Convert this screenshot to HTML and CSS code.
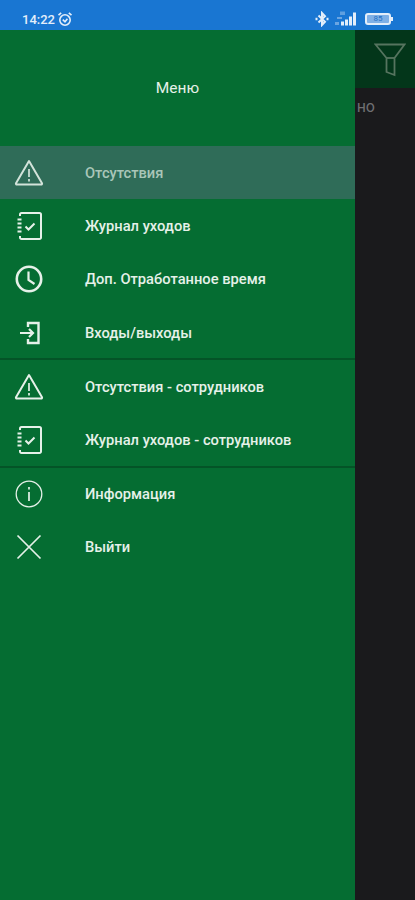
FILE: index.html
```html
<!DOCTYPE html>
<html lang="ru">
<head>
    <meta charset="UTF-8">
    <meta name="viewport" content="width=device-width, initial-scale=1.0">
    <title>Меню</title>
    <link rel="stylesheet" href="styles.css">
</head>
<body>
    <div class="status-bar">
        <div class="status-left">
            <span class="status-time">14:22</span>
            <svg class="status-alarm" width="16" height="16" viewBox="0 0 16 16" fill="none" stroke="#e3eefa" stroke-width="1.6">
                <circle cx="8" cy="9" r="5.2"/>
                <path d="M1.5 4.2 4.2 1.8M14.5 4.2 11.8 1.8M5.8 8.6 8 10.8l2.4-3"/>
            </svg>
        </div>
        <div class="status-right">
            <svg width="14" height="16" viewBox="0 0 14 16" fill="none" stroke="#e3eefa" stroke-width="2">
                <path d="M3.500 4.500 10 10.800 7 14V2l3 3.200L3.500 11.500"/>
                <path d="M0.500 8h2M11.500 8h2" stroke-width="2.400"/>
            </svg>
            <svg width="26" height="16" viewBox="0 0 26 16" fill="#e3eefa">
                <path d="M6 0.500h5v3.500H6z" opacity="0.35"/>
                <path d="M1 11h4v3H1zM3 6h5v2H3z" opacity="0.4"/>
                <rect x="7" y="10.500" width="3" height="4"/>
                <rect x="11" y="8.500" width="3" height="6"/>
                <rect x="15" y="5.500" width="3" height="9"/>
                <rect x="19" y="1.500" width="3" height="13"/>
            </svg>
            <div class="battery"><span class="battery-level">85</span></div>
        </div>
    </div>

    <div class="screen">
        <div class="main">
            <div class="toolbar">
                <svg width="32" height="34" viewBox="0 0 32 34" fill="none" stroke="#56745f" stroke-width="1.800">
                    <path d="M1.500 1.500h29L20.500 15v17l-8-3V15z"/>
                    <path d="M12.500 15h8"/>
                </svg>
            </div>
            <div class="empty-text">но</div>
        </div>

        <nav class="drawer">
            <div class="drawer-title">Меню</div>

            <div class="menu-group">
                <a class="menu-item active">
                    <svg class="menu-icon" viewBox="0 0 30 30"><use href="#ic-warning"/></svg>
                    <span>Отсутствия</span>
                </a>
                <a class="menu-item">
                    <svg class="menu-icon" viewBox="0 0 30 30"><use href="#ic-journal"/></svg>
                    <span>Журнал уходов</span>
                </a>
                <a class="menu-item">
                    <svg class="menu-icon" viewBox="0 0 30 30"><use href="#ic-clock"/></svg>
                    <span>Доп. Отработанное время</span>
                </a>
                <a class="menu-item">
                    <svg class="menu-icon" viewBox="0 0 30 30"><use href="#ic-enter"/></svg>
                    <span>Входы/выходы</span>
                </a>
            </div>

            <div class="menu-group">
                <a class="menu-item">
                    <svg class="menu-icon" viewBox="0 0 30 30"><use href="#ic-warning"/></svg>
                    <span>Отсутствия - сотрудников</span>
                </a>
                <a class="menu-item">
                    <svg class="menu-icon" viewBox="0 0 30 30"><use href="#ic-journal"/></svg>
                    <span>Журнал уходов - сотрудников</span>
                </a>
            </div>

            <div class="menu-group">
                <a class="menu-item">
                    <svg class="menu-icon" viewBox="0 0 30 30"><use href="#ic-info"/></svg>
                    <span>Информация</span>
                </a>
                <a class="menu-item">
                    <svg class="menu-icon" viewBox="0 0 30 30"><use href="#ic-close"/></svg>
                    <span>Выйти</span>
                </a>
            </div>
        </nav>
    </div>

    <!-- icons -->
    <svg class="icon-defs" width="0" height="0">
        <symbol id="ic-warning" viewBox="0 0 30 30">
            <path d="M15 3 28 25.200a1 1 0 0 1-.9 1.400H2.900a1 1 0 0 1-.9-1.400z" fill="none" stroke="currentColor" stroke-width="2" stroke-linejoin="round"/>
            <path d="M15 11v8M15 21v2.500" fill="none" stroke="currentColor" stroke-width="1.700"/>
        </symbol>
        <symbol id="ic-journal" viewBox="0 0 30 30">
            <path d="M6 5V3.500A1.500 1.500 0 0 1 7.500 2H25.500A1.500 1.500 0 0 1 27 3.500v23a1.500 1.500 0 0 1-1.500 1.500H7.500A1.500 1.500 0 0 1 6 26.500V25" fill="none" stroke="currentColor" stroke-width="2"/>
            <path d="M3.500 8.500h4M3.500 12.500h4M3.500 16.500h4M3.500 20.500h4" fill="none" stroke="currentColor" stroke-width="1.800"/>
            <path d="M11.500 15.500 14.500 18.500 20.500 12.500" fill="none" stroke="currentColor" stroke-width="2"/>
        </symbol>
        <symbol id="ic-clock" viewBox="0 0 30 30">
            <circle cx="15" cy="15" r="12.200" fill="none" stroke="currentColor" stroke-width="2.600"/>
            <path d="M14.500 7.500V16l6 4" fill="none" stroke="currentColor" stroke-width="2.200"/>
        </symbol>
        <symbol id="ic-enter" viewBox="0 0 30 30">
            <path d="M14 9V5h10.500v20H14v-4" fill="none" stroke="currentColor" stroke-width="2.400"/>
            <path d="M6 15h12.500M15 11l4 4-4 4" fill="none" stroke="currentColor" stroke-width="2.200"/>
        </symbol>
        <symbol id="ic-info" viewBox="0 0 30 30">
            <circle cx="15" cy="15" r="12.800" fill="none" stroke="currentColor" stroke-width="1.300"/>
            <path d="M15 13v9M15 8v2.500" fill="none" stroke="currentColor" stroke-width="1.700"/>
        </symbol>
        <symbol id="ic-close" viewBox="0 0 30 30">
            <path d="M3.500 3.500 26.500 26.500M26.500 3.500 3.500 26.500" fill="none" stroke="currentColor" stroke-width="1.700"/>
        </symbol>
    </svg>
</body>
</html>
```

FILE: styles.css
```css
html, body {
    margin: 0;
    padding: 0;
}

body {
    width: 415px;
    height: 900px;
    overflow: hidden;
    font-family: Roboto, "Liberation Sans", sans-serif;
    background-color: #1a1a1c;
}

.status-bar {
    height: 30px;
    padding: 8px 24px 0 22px;
    box-sizing: border-box;
    background-color: #1976d2;
    display: flex;
    align-items: center;
    justify-content: space-between;
    color: #e3eefa;
}

.status-left {
    display: flex;
    align-items: center;
    gap: 2px;
}

.status-time {
    font-size: 13px;
    font-weight: 500;
}

.status-right {
    display: flex;
    align-items: center;
    gap: 5px;
}

.battery {
    position: relative;
    width: 22px;
    height: 8px;
    border: 2px solid #e3eefa;
    border-radius: 3px;
    background-color: #7fb0e6;
    display: flex;
    align-items: center;
    justify-content: center;
}

.battery::after {
    content: "";
    position: absolute;
    right: -4px;
    top: 2px;
    width: 2px;
    height: 4px;
    background-color: #e3eefa;
}

.battery-level {
    font-size: 8px;
    line-height: 8px;
    color: #1f6fc4;
}

.screen {
    position: relative;
    height: 870px;
}

.toolbar {
    height: 58px;
    background-color: #03361a;
    display: flex;
    justify-content: flex-end;
    align-items: flex-start;
    padding: 13px 9px 0 0;
    box-sizing: border-box;
}

.empty-text {
    padding: 10px 40px 0 0;
    text-align: right;
    font-size: 16px;
    line-height: 18px;
    color: #6f6f72;
}

.drawer {
    position: absolute;
    top: 0;
    left: 0;
    bottom: 0;
    width: 355px;
    background-color: #056d32;
    color: #e6f1e9;
}

.drawer-title {
    height: 116px;
    box-sizing: border-box;
    display: flex;
    justify-content: center;
    align-items: center;
    font-size: 15.500px;
}

.menu-group {
    border-bottom: 2px solid #045427;
}

.menu-group:last-child {
    border-bottom: none;
    margin-top: -0.500px;
}

.menu-item {
    height: 53.300px;
    display: flex;
    align-items: center;
    font-size: 14.700px;
    font-weight: 500;
}

.menu-group .menu-item:last-child {
    margin-bottom: -1px;
}

.menu-item.active {
    background-color: #2f6c58;
    color: #a9c6b8;
}

.menu-item.active .menu-icon {
    color: #d3e3da;
}

.menu-icon {
    width: 30px;
    height: 30px;
    margin: 0 41px 0 14px;
    flex-shrink: 0;
}

.icon-defs {
    position: absolute;
}
```
